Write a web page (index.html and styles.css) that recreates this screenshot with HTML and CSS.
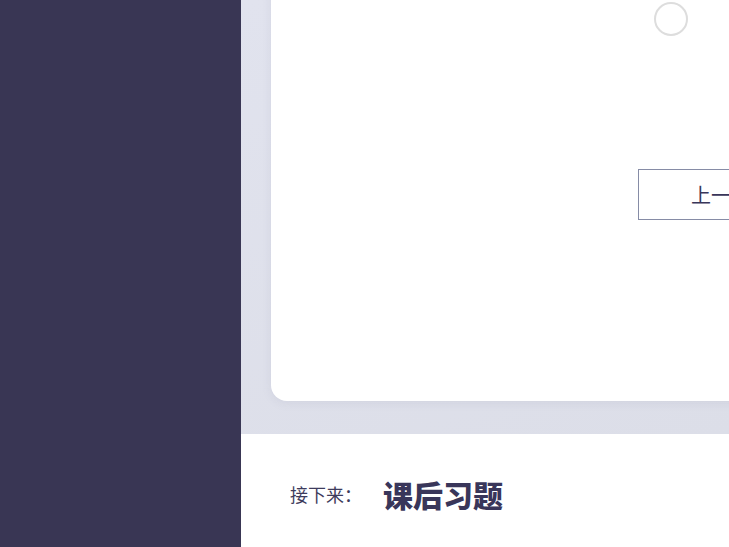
FILE: index.html
```html
<!DOCTYPE html>
<html lang="zh">
<head>
<meta charset="utf-8">
<link rel="stylesheet" href="styles.css">
</head>
<body>
<div class="layout">
  <aside class="sidebar"></aside>
  <main class="main">
    <section class="stage">
      <div class="card">
        <div class="circle"></div>
        <div class="nav">
          <button class="btn">上一题</button>
        </div>
      </div>
    </section>
    <footer class="next">
      <span class="next-label">接下来：</span>
      <span class="next-title">课后习题</span>
    </footer>
  </main>
</div>
</body>
</html>
```

FILE: styles.css
```css
html, body {
  margin: 0;
  padding: 0;
  width: 729px;
  height: 547px;
  overflow: hidden;
  font-family: "Noto Sans CJK SC", "Noto Sans", sans-serif;
}
.layout {
  display: flex;
  height: 547px;
}
.sidebar {
  width: 241px;
  flex: none;
  background: #393654;
}
.main {
  flex: 1;
  display: flex;
  flex-direction: column;
  min-width: 0;
}
.stage {
  height: 434px;
  flex: none;
  background: linear-gradient(160deg, #e1e3ee 0%, #dcdee8 100%);
  padding: 0 0 33px 30px;
  box-sizing: border-box;
  overflow: hidden;
}
.card {
  height: 431px;
  margin-top: -30px;
  width: 600px;
  background: #fff;
  border-radius: 16px;
  box-shadow: 0 2px 10px rgba(120, 125, 160, 0.12);
  position: relative;
}
.circle {
  position: absolute;
  left: 383px;
  top: 32px;
  width: 30px;
  height: 30px;
  border: 2px solid #dddddd;
  border-radius: 50%;
}
.nav {
  position: absolute;
  left: 367px;
  top: 199px;
}
.btn {
  width: 130px;
  height: 51px;
  border: 1px solid #868ca6;
  background: #fff;
  border-radius: 0;
  color: #39365a;
  font-family: "Noto Sans CJK SC", sans-serif;
  font-size: 20px;
  padding: 0 0 0 52px;
  text-align: left;
  box-sizing: border-box;
}
.next {
  flex: 1;
  background: #fff;
  display: flex;
  align-items: center;
  padding-left: 49px;
  padding-top: 6px;
  box-sizing: border-box;
}
.next-label {
  font-size: 18px;
  font-weight: 400;
  color: #3e3b5c;
  width: 93px;
}
.next-title {
  font-size: 30px;
  font-weight: 900;
  color: #39365a;
}
```
